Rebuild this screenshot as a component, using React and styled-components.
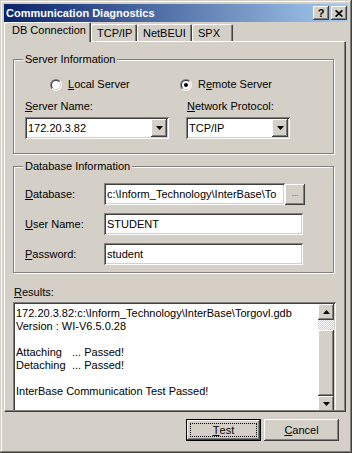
import React from 'react';
import styled, { createGlobalStyle } from 'styled-components';

const FACE = '#d4d0c8';

const raised = `
  box-shadow: inset -1px -1px #404040, inset 1px 1px #fff,
    inset -2px -2px #808080, inset 2px 2px ${FACE};
`;
const sunken = `
  box-shadow: inset 1px 1px #808080, inset -1px -1px #fff,
    inset 2px 2px #404040, inset -2px -2px ${FACE};
`;

const GlobalStyle = createGlobalStyle`
  html, body { margin: 0; padding: 0; background: ${FACE}; }
  body {
    font-family: "Liberation Sans", Arial, sans-serif;
    font-size: 11px;
    color: #000;
  }
  u { text-decoration-thickness: 1px; text-underline-offset: 1px; }
`;

const Arrow = ({ up }) => (
  <svg width="7" height="4" viewBox="0 0 7 4">
    <polygon points={up ? '0,4 7,4 3.5,0' : '0,0 7,0 3.5,4'} fill="#000" />
  </svg>
);

const CloseGlyph = () => (
  <svg width="8" height="7" viewBox="0 0 8 7">
    <path d="M0.6 0.4 L7.4 6.6 M7.4 0.4 L0.6 6.6" stroke="#000" strokeWidth="1.7" />
  </svg>
);

const tabs = [
  { label: 'DB Connection', width: 87, active: true },
  { label: 'TCP/IP', width: 46 },
  { label: 'NetBEUI', width: 55 },
  { label: 'SPX', width: 41 },
];

export default function App() {
  return (
    <>
      <GlobalStyle />
      <Window>
        <TitleBar>
          <Title>Communication Diagnostics</Title>
          <TitleButtons>
            <TitleButton><HelpGlyph>?</HelpGlyph></TitleButton>
            <TitleButton><CloseGlyph /></TitleButton>
          </TitleButtons>
        </TitleBar>

        <TabStrip>
          {tabs.map((t) => (
            <Tab key={t.label} $w={t.width} $active={t.active}>{t.label}</Tab>
          ))}
        </TabStrip>

        <Panel>
          <PanelBody>
            <Group $top={11}>
              <Legend>Server Information</Legend>
              <ServerGrid>
                <Radio $indent={25}>
                  <RadioOuter><RadioInner><RadioWell /></RadioInner></RadioOuter>
                  <span><u>L</u>ocal Server</span>
                </Radio>
                <Radio $indent={-6}>
                  <RadioOuter><RadioInner><RadioWell $checked /></RadioInner></RadioOuter>
                  <span>R<u>e</u>mote Server</span>
                </Radio>
                <FieldLabel><u>S</u>erver Name:</FieldLabel>
                <FieldLabel $nudge={1}><u>N</u>etwork Protocol:</FieldLabel>
                <Combo $w={144}>
                  <ComboText>172.20.3.82</ComboText>
                  <ComboButton><Arrow /></ComboButton>
                </Combo>
                <Combo $w={104}>
                  <ComboText>TCP/IP</ComboText>
                  <ComboButton><Arrow /></ComboButton>
                </Combo>
              </ServerGrid>
            </Group>

            <Group $top={6}>
              <Legend>Database Information</Legend>
              <DbGrid>
                <span><u>D</u>atabase:</span>
                <DbRow>
                  <Edit $w={181}>c:\Inform_Technology\InterBase\To</Edit>
                  <BrowseButton>...</BrowseButton>
                </DbRow>
                <span><u>U</u>ser Name:</span>
                <Edit $w={199}>STUDENT</Edit>
                <span><u>P</u>assword:</span>
                <Edit $w={199}>student</Edit>
              </DbGrid>
            </Group>

            <ResultsLabel><u>R</u>esults:</ResultsLabel>
            <ResultsBox>
              <ResultsText>
                <div>172.20.3.82:c:\Inform_Technology\InterBase\Torgovl.gdb</div>
                <div>Version : WI-V6.5.0.28</div>
                <div>&nbsp;</div>
                <div><StepName>Attaching</StepName>... Passed!</div>
                <div><StepName>Detaching</StepName>... Passed!</div>
                <div>&nbsp;</div>
                <div>InterBase Communication Test Passed!</div>
              </ResultsText>
              <ScrollBar>
                <ScrollButton><Arrow up /></ScrollButton>
                <ScrollTrack />
                <ScrollThumb />
                <ScrollButton><Arrow /></ScrollButton>
              </ScrollBar>
            </ResultsBox>
          </PanelBody>
        </Panel>

        <ButtonRow>
          <PushButton $default>
            <FocusRing><u>T</u>est</FocusRing>
          </PushButton>
          <PushButton><u>C</u>ancel</PushButton>
        </ButtonRow>
      </Window>
    </>
  );
}

const Window = styled.div`
  width: 352px;
  height: 453px;
  box-sizing: border-box;
  padding: 4px;
  background: ${FACE};
  box-shadow: inset -1px -1px #404040, inset 1px 1px ${FACE},
    inset -2px -2px #808080, inset 2px 2px #fff;
  display: flex;
  flex-direction: column;
`;

const TitleBar = styled.div`
  height: 18px;
  display: flex;
  align-items: center;
  justify-content: space-between;
  padding: 0 1px 0 2px;
  background: linear-gradient(to right, #0a246a, #a6caf0);
`;

const Title = styled.span`
  color: #fff;
  font-weight: bold;
  font-size: 11px;
  line-height: 13px;
`;

const TitleButtons = styled.div`
  display: flex;
  gap: 2px;
`;

const TitleButton = styled.div`
  width: 16px;
  height: 14px;
  background: ${FACE};
  ${raised}
  display: flex;
  align-items: center;
  justify-content: center;
`;

const HelpGlyph = styled.span`
  font-weight: bold;
  font-size: 11px;
  line-height: 11px;
  margin-top: 1px;
`;

const TabStrip = styled.div`
  height: 19px;
  display: flex;
  align-items: flex-end;
`;

const Tab = styled.div`
  position: relative;
  z-index: ${(p) => (p.$active ? 1 : 0)};
  box-sizing: border-box;
  width: ${(p) => p.$w}px;
  height: ${(p) => (p.$active ? 20 : 17)}px;
  margin-bottom: ${(p) => (p.$active ? -1 : 0)}px;
  padding: ${(p) => (p.$active ? '2px 0 0 8px' : '3px 0 0 6px')};
  line-height: 13px;
  background: ${FACE};
  border-radius: 2px 2px 0 0;
  box-shadow: inset 1px 1px #fff, inset -1px 0 #404040, inset -2px 0 #808080;
  white-space: nowrap;
`;

const Panel = styled.div`
  width: 342px;
  height: 371px;
  box-sizing: border-box;
  border: 1px solid;
  border-color: #fff #404040 #404040 #fff;
`;

const PanelBody = styled.div`
  height: 100%;
  box-sizing: border-box;
  border-right: 1px solid #808080;
  border-bottom: 1px solid #808080;
  padding: 0 0 0 8px;
  overflow: hidden;
  display: flex;
  flex-direction: column;
`;

const Group = styled.fieldset`
  margin: ${(p) => p.$top}px 0 0;
  padding: 0;
  width: 321px;
  box-sizing: border-box;
  min-inline-size: 0;
  border: 1px solid #808080;
  box-shadow: inset 1px 1px #fff, 1px 1px #fff;
`;

const Legend = styled.legend`
  margin-left: 9px;
  padding: 0 2px;
  line-height: 13px;
  background: ${FACE};
`;

const ServerGrid = styled.div`
  display: grid;
  grid-template-columns: 161px 1fr;
  padding: 12px 0 14px 11px;
  line-height: 13px;
`;

const Radio = styled.div`
  display: flex;
  align-items: center;
  gap: 6px;
  height: 13px;
  margin-left: ${(p) => p.$indent}px;
`;

const RadioOuter = styled.span`
  width: 12px;
  height: 12px;
  border-radius: 50%;
  background: linear-gradient(135deg, #808080 50%, #fff 50%);
  display: flex;
  align-items: center;
  justify-content: center;
`;

const RadioInner = styled.span`
  width: 10px;
  height: 10px;
  border-radius: 50%;
  background: linear-gradient(135deg, #404040 50%, ${FACE} 50%);
  display: flex;
  align-items: center;
  justify-content: center;
`;

const RadioWell = styled.span`
  width: 8px;
  height: 8px;
  border-radius: 50%;
  background: #fff;
  display: flex;
  align-items: center;
  justify-content: center;
  &::after {
    content: '';
    width: 4px;
    height: 4px;
    border-radius: 50%;
    background: ${(p) => (p.$checked ? '#000' : 'transparent')};
  }
`;

const FieldLabel = styled.span`
  margin-top: 9px;
  margin-left: ${(p) => p.$nudge || 0}px;
`;

const Combo = styled.div`
  margin-top: 4px;
  width: ${(p) => p.$w}px;
  height: 22px;
  box-sizing: border-box;
  padding: 2px;
  background: #fff;
  ${sunken}
  display: flex;
`;

const ComboText = styled.span`
  flex: 1;
  padding-left: 1px;
  line-height: 18px;
  overflow: hidden;
  white-space: nowrap;
`;

const ComboButton = styled.span`
  width: 16px;
  height: 18px;
  background: ${FACE};
  ${raised}
  display: flex;
  align-items: center;
  justify-content: center;
`;

const DbGrid = styled.div`
  display: grid;
  grid-template-columns: 79px auto;
  grid-auto-rows: 22px;
  row-gap: 8px;
  align-items: center;
  padding: 10px 0 7px 11px;
  line-height: 13px;
`;

const DbRow = styled.div`
  display: flex;
  align-items: flex-start;
`;

const Edit = styled.div`
  flex: none;
  width: ${(p) => p.$w}px;
  height: 22px;
  box-sizing: border-box;
  padding: 2px 3px;
  line-height: 18px;
  background: #fff;
  ${sunken}
  overflow: hidden;
  white-space: nowrap;
`;

const BrowseButton = styled.div`
  flex: none;
  width: 20px;
  height: 21px;
  margin-top: 1px;
  box-sizing: border-box;
  background: ${FACE};
  ${raised}
  font-size: 8px;
  line-height: 19px;
  text-align: center;
  color: #404040;
`;

const ResultsLabel = styled.div`
  margin-top: 13px;
  padding-left: 1px;
  line-height: 13px;
`;

const ResultsBox = styled.div`
  flex: none;
  margin-top: 3px;
  width: 323px;
  height: 130px;
  box-sizing: border-box;
  padding: 2px;
  background: #fff;
  ${sunken}
  display: flex;
`;

const ResultsText = styled.div`
  flex: 1;
  padding: 3px 1px;
  line-height: 13px;
  white-space: nowrap;
  overflow: hidden;
`;

const StepName = styled.span`
  display: inline-block;
  width: 56px;
`;

const ScrollBar = styled.div`
  width: 16px;
  display: flex;
  flex-direction: column;
  flex: none;
`;

const ScrollButton = styled.div`
  height: 16px;
  flex: none;
  background: ${FACE};
  ${raised}
  display: flex;
  align-items: center;
  justify-content: center;
`;

const ScrollTrack = styled.div`
  height: 10px;
  flex: none;
  background: repeating-conic-gradient(${FACE} 0 25%, #fff 0 50%) 0 0 / 2px 2px;
`;

const ScrollThumb = styled.div`
  height: 66px;
  flex: none;
  background: ${FACE};
  ${raised}
`;

const ButtonRow = styled.div`
  display: flex;
  justify-content: flex-end;
  gap: 3px;
  padding: 7px 9px 0 0;
`;

const PushButton = styled.div`
  width: 75px;
  height: 22px;
  box-sizing: border-box;
  background: ${FACE};
  border: ${(p) => (p.$default ? '1px solid #000' : 'none')};
  ${raised}
  display: flex;
  align-items: center;
  justify-content: center;
  line-height: 13px;
`;

const FocusRing = styled.span`
  align-self: stretch;
  flex: 1;
  margin: 3px;
  border: 1px dotted #000;
  display: flex;
  align-items: center;
  justify-content: center;
`;
